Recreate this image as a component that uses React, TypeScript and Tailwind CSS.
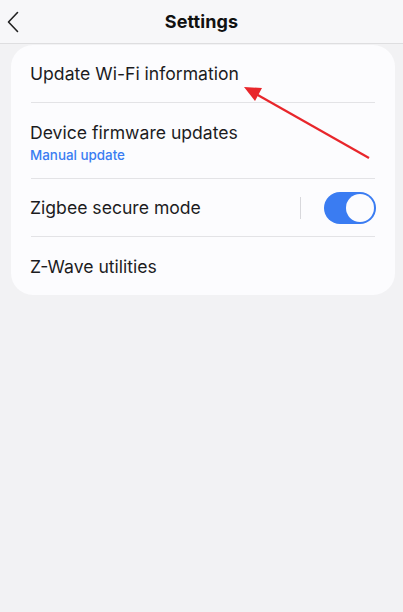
const font = { fontFamily: "Inter, 'Noto Sans', sans-serif" }

function Divider() {
  return <div className="mx-5 h-px bg-[#e3e3e6]" />
}

export default function App() {
  return (
    <div className="relative w-[403px] h-[612px] bg-[#f2f2f4] overflow-hidden" style={font}>
      {/* Header */}
      <div className="relative h-[44px] bg-[#f7f7f9] border-b border-[#dedee0] flex items-center justify-center">
        <button className="absolute left-[6px] top-[11px] text-[#222]">
          <svg width="14" height="22" viewBox="0 0 14 22" fill="none">
            <path d="M11.5 1.5 L2.5 11 L11.5 20.5" stroke="currentColor" strokeWidth="1.6" strokeLinecap="round" strokeLinejoin="round" />
          </svg>
        </button>
        <h1 className="text-[18px] font-bold text-[#111] tracking-[0.1px]">Settings</h1>
      </div>

      {/* Card */}
      <div className="ml-[11px] mr-[8px] mt-px bg-[#fcfcfe] rounded-[22px]">
        <div className="h-[57px] flex items-center px-[19px] pt-[2px]">
          <span className="text-[17.6px] text-[#1c1c1e]">Update Wi-Fi information</span>
        </div>
        <Divider />
        <div className="h-[75px] flex flex-col justify-center px-[19px] pt-[4px]">
          <span className="text-[17.6px] text-[#1c1c1e] leading-[22px]">Device firmware updates</span>
          <span className="text-[13.4px] text-[#3a7cf2] font-medium mt-[2px] leading-[18px]">Manual update</span>
        </div>
        <Divider />
        <div className="h-[57px] flex items-center px-[19px]">
          <span className="flex-1 text-[17.6px] text-[#1c1c1e] pt-[2px]">Zigbee secure mode</span>
          <div className="w-px h-[22px] bg-[#d8d8dc] mr-[23px]" />
          <div className="w-[52px] h-[32px] rounded-full bg-[#3a7cf2] flex items-center justify-end pr-[2px]">
            <div className="w-[28px] h-[28px] rounded-full bg-[#fcfcfe]" />
          </div>
        </div>
        <Divider />
        <div className="h-[58px] flex items-center px-[19px] pt-[2px]">
          <span className="text-[17.6px] text-[#1c1c1e]">Z-Wave utilities</span>
        </div>
      </div>

      {/* Annotation arrow */}
      <svg className="absolute left-0 top-0 pointer-events-none" width="403" height="612">
        <line x1="369" y1="158" x2="256" y2="94" stroke="#e8262b" strokeWidth="2.2" />
        <polygon points="244,87 262,88 255,101" fill="#e8262b" />
      </svg>
    </div>
  )
}
